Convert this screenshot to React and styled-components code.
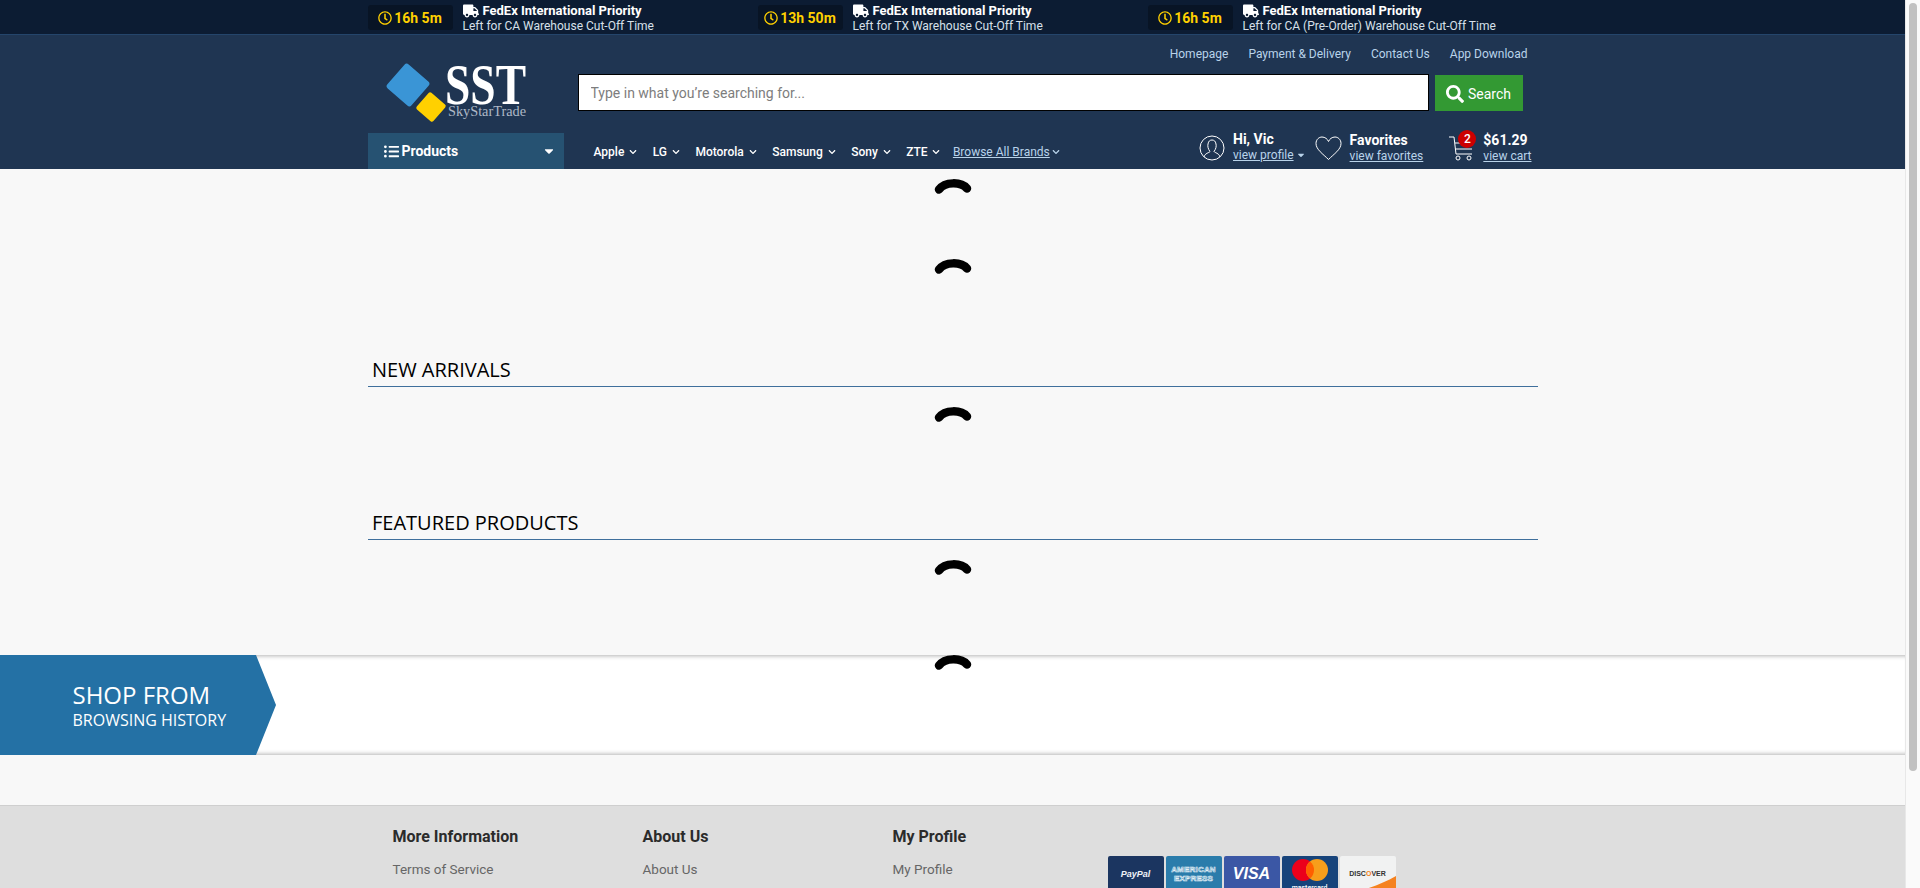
import React from 'react';
import styled, { createGlobalStyle } from 'styled-components';
import { FaRegClock, FaTruck, FaListUl, FaSearch, FaCaretDown, FaChevronDown } from 'react-icons/fa';

const GlobalStyle = createGlobalStyle`
  html, body {
    margin: 0;
    height: 888px;
    overflow: hidden;
    background: #f8f8f8;
    font-family: Roboto, "Liberation Sans", sans-serif;
  }
  * { box-sizing: border-box; }
`;

const Page = styled.div`
  width: calc(100vw - 15px);
  height: 888px;
  overflow: hidden;
`;

const Scrollbar = styled.div`
  position: fixed;
  top: 0;
  right: 0;
  width: 15px;
  height: 100vh;
  background: #fafafa;
  border-left: 1px solid #e8e8e8;
  padding: 3px 3px 0 3px;
`;

const ScrollThumb = styled.div`
  height: 768px;
  background: #c1c1c1;
  border-radius: 4px;
`;

const Container = styled.div`
  width: 1170px;
  margin: 0 auto;
`;

const TopBar = styled.div`
  height: 35px;
  background: #0c1c33;
  border-bottom: 1px solid #24456b;
`;

const TopRow = styled(Container)`
  display: grid;
  grid-template-columns: repeat(3, 1fr);
`;

const CutOff = styled.div`
  display: flex;
  gap: 10px;
  padding-top: 3px;
`;

const Timer = styled.div`
  display: flex;
  align-items: center;
  justify-content: center;
  gap: 2px;
  width: 85px;
  height: 25px;
  margin-top: 2px;
  background: #081425;
  border-radius: 3px;
  color: #ffd000;
  font-size: 14px;
  font-weight: 700;
`;

const CutOffText = styled.div`
  color: #fff;
  line-height: 14px;
`;

const Carrier = styled.div`
  display: flex;
  align-items: center;
  gap: 4px;
  font-size: 13px;
  font-weight: 700;
`;

const CutOffNote = styled.div`
  font-size: 12px;
  color: #d7e0ea;
`;

const Header = styled.header`
  height: 134px;
  background: #1f3552;
`;

const HeaderInner = styled(Container)`
  display: grid;
  grid-template-columns: 196px 1fr;
  grid-template-rows: 98px 36px;
`;

const LogoCell = styled.div`
  padding: 25px 0 0 18px;
`;

const HeaderMain = styled.div`
  padding-top: 11px;
`;

const TopLinks = styled.nav`
  display: flex;
  justify-content: flex-end;
  gap: 20px;
  height: 28px;
  padding-right: 10px;
`;

const TopLink = styled.a`
  font-size: 12px;
  line-height: 16px;
  color: #b9d3ea;
`;

const SearchRow = styled.form`
  display: flex;
  align-items: flex-start;
  gap: 6px;
  margin-left: 14px;
  margin-right: 15px;
`;

const SearchInput = styled.input`
  flex: 1;
  height: 37px;
  padding: 0 12px;
  border: 1px solid #000;
  background: #fff;
  font-family: inherit;
  font-size: 14px;
  &::placeholder { color: #7d7d7d; opacity: 1; }
`;

const SearchButton = styled.button`
  display: flex;
  align-items: center;
  justify-content: center;
  gap: 4px;
  width: 88px;
  height: 36px;
  margin-top: 1px;
  padding: 2px 0 0;
  border: 0;
  background: #339933;
  color: #fff;
  font-family: inherit;
  font-size: 14px;
  font-weight: 400;
`;

const ProductsButton = styled.div`
  display: flex;
  align-items: center;
  justify-content: space-between;
  padding: 0 8px 0 16px;
  background: #265272;
  color: #fff;
  font-size: 14px;
  font-weight: 700;
`;

const ProductsLabel = styled.span`
  display: flex;
  align-items: center;
  gap: 3px;
`;

const BottomRow = styled.div`
  display: flex;
  justify-content: space-between;
  align-items: center;
  padding-left: 30px;
`;

const BrandNav = styled.nav`
  display: flex;
  align-items: center;
  gap: 15.4px;
  padding-top: 1px;
`;

const Brand = styled.a`
  display: flex;
  align-items: center;
  gap: 5px;
  font-size: 12px;
  font-weight: 500;
  color: #fff;
`;

const AllBrands = styled(Brand)`
  gap: 2px;
  margin-left: -3px;
  font-weight: 400;
  color: #b9d3ea;
  span { text-decoration: underline; }
`;

const Account = styled.div`
  display: flex;
  margin-top: -6px;
`;

const AccountItem = styled.div`
  display: flex;
  align-items: center;
  position: relative;
  gap: ${(p) => p.$gap}px;
  margin-right: ${(p) => p.$after}px;
`;

const AccountText = styled.div`
  line-height: 15px;
`;

const AccountTitle = styled.div`
  font-size: 14px;
  font-weight: 700;
  color: #fff;
`;

const AccountLink = styled.a`
  display: block;
  margin-top: 1px;
  font-size: 12px;
  color: #b9d3ea;
  text-decoration: underline;
`;

const Caret = styled.span`
  display: inline-block;
  margin-left: 2px;
  vertical-align: -1px;
`;

const CartBadge = styled.span`
  position: absolute;
  left: 10px;
  top: -2px;
  width: 18px;
  height: 18px;
  border-radius: 50%;
  background: #cc0000;
  color: #fff;
  font-size: 12px;
  font-weight: 500;
  line-height: 18px;
  text-align: center;
`;

const Main = styled.main`
  padding-top: 10px;
`;

const SpinnerSlot = styled.div`
  display: flex;
  justify-content: center;
  height: 16px;
  margin-top: ${(p) => p.$top || 0}px;
`;

const SectionTitle = styled.h2`
  height: 32px;
  margin: ${(p) => p.$top}px 0 0;
  padding-left: 4.5px;
  border-bottom: 1px solid #3f6f9c;
  font-family: "Open Sans", sans-serif;
  font-size: 20px;
  font-weight: 400;
  line-height: 30px;
  color: #000;
`;

const HistoryBand = styled.section`
  position: relative;
  height: 100px;
  margin-top: 79px;
  background: #fff;
  box-shadow: inset 0 5px 4px -4px rgba(0, 0, 0, 0.3), inset 0 -5px 4px -4px rgba(0, 0, 0, 0.3);
`;

const BandSpinner = styled.div`
  position: absolute;
  top: 0;
  left: 0;
  right: 0;
  display: flex;
  justify-content: center;
`;

const Ribbon = styled.div`
  width: 276px;
  height: 100px;
  padding: 25px 0 0 72.5px;
  background: #2471a5;
  clip-path: polygon(0 0, 256px 0, 276px 50%, 256px 100%, 0 100%);
  font-family: "Open Sans", sans-serif;
  color: #fff;
`;

const RibbonTop = styled.div`
  font-size: 24px;
  line-height: 30px;
`;

const RibbonBottom = styled.div`
  font-size: 16px;
  line-height: 20px;
`;

const Footer = styled.footer`
  height: 83px;
  margin-top: 50px;
  background: #dedede;
  border-top: 1px solid #cfcfcf;
  overflow: hidden;
`;

const FooterInner = styled(Container)`
  display: grid;
  grid-template-columns: 250px 250px 215px 1fr;
  padding: 21px 0 0 25px;
`;

const FooterCol = styled.div``;

const FooterTitle = styled.div`
  font-size: 16px;
  font-weight: 700;
  line-height: 20px;
  color: #2b2b2b;
`;

const FooterLink = styled.a`
  display: block;
  margin-top: 14px;
  font-size: 13.5px;
  line-height: 16px;
  color: #666;
`;

const PayRow = styled.div`
  display: flex;
  gap: 2px;
  padding-top: 29px;
`;

const PayCard = styled.div`
  position: relative;
  display: flex;
  align-items: center;
  justify-content: center;
  flex: none;
  width: 56px;
  height: 36px;
  overflow: hidden;
  border-radius: 2px;
  background: ${(p) => p.$bg};
`;

const PayPalText = styled.span`
  font: italic 700 9px "Liberation Sans", sans-serif;
  color: #eef2f7;
`;

const AmexText = styled.span`
  font: 700 8px/9px "Liberation Sans", sans-serif;
  text-align: center;
  letter-spacing: 0.2px;
  color: #2a7cab;
  -webkit-text-stroke: 0.6px #e4f0f7;
`;

const VisaText = styled.span`
  font: italic 700 16px "Liberation Sans", sans-serif;
  color: #fff;
`;

const MasterCircles = styled.svg`
  margin-bottom: 9px;
`;

const MasterWord = styled.span`
  position: absolute;
  left: 0;
  right: 0;
  bottom: 0;
  font: 500 7px Roboto, sans-serif;
  text-align: center;
  color: #fff;
`;

const DiscoverText = styled.span`
  margin-bottom: 2px;
  font: 700 7px "Liberation Sans", sans-serif;
  color: #333;
  b { color: #f58220; }
`;

const DiscoverCorner = styled.svg`
  position: absolute;
  right: 0;
  bottom: 0;
`;

const Spinner = () => (
  <svg width="38" height="16" viewBox="0 0 38 16">
    <path d="M5 10.5 C11 2.5 27 2.5 33 9.5" fill="none" stroke="#000" strokeWidth="8.5" strokeLinecap="round" />
  </svg>
);

const Logo = () => (
  <svg width="150" height="66" viewBox="0 0 150 66">
    <rect x="6" y="9" width="32" height="32" rx="3" fill="#3a95d6" transform="rotate(41 22 25)" />
    <rect x="34" y="36" width="22" height="22" rx="2" fill="#ffd000" transform="rotate(41 45 47)" />
    <text x="59" y="44" fill="#fff" fontFamily="Liberation Serif" fontWeight="700" fontSize="56" textLength="81" lengthAdjust="spacingAndGlyphs">SST</text>
    <text x="62" y="56" fill="#aeb8c6" fontFamily="Liberation Serif" fontSize="14" textLength="78" lengthAdjust="spacingAndGlyphs">SkyStarTrade</text>
  </svg>
);

const UserIcon = () => (
  <svg width="26" height="26" viewBox="0 0 26 26" fill="none" stroke="#fff" strokeWidth="1">
    <circle cx="13" cy="13" r="12" />
    <path d="M5 22 C6 18 10 18 11 16.5 C9 14 8.5 11 9 9 C9.5 6 11 5 13 5 C15 5 16.5 6 17 9 C17.5 11 17 14 15 16.5 C16 18 20 18 21 22" />
  </svg>
);

const HeartIcon = () => (
  <svg width="27" height="25" viewBox="0 0 27 25" fill="none" stroke="#fff" strokeWidth="1">
    <path d="M13.5 23.5 C8 18 1 13.5 1 7.5 C1 3.5 4 1 7 1 C10 1 12.5 3 13.5 5.5 C14.5 3 17 1 20 1 C23 1 26 3.5 26 7.5 C26 13.5 19 18 13.5 23.5 Z" />
  </svg>
);

const CartIcon = () => (
  <svg width="26" height="28" viewBox="0 0 26 28" fill="none" stroke="#fff" strokeWidth="1">
    <path d="M1 3 H6 L8 20 H24" />
    <path d="M7 9 H24 M7.5 15 H24" />
    <circle cx="10" cy="24" r="2" />
    <circle cx="21" cy="24" r="2" />
  </svg>
);

const cutOffs = [
  { time: '16h 5m', note: 'Left for CA Warehouse Cut-Off Time' },
  { time: '13h 50m', note: 'Left for TX Warehouse Cut-Off Time' },
  { time: '16h 5m', note: 'Left for CA (Pre-Order) Warehouse Cut-Off Time' },
];

const brands = ['Apple', 'LG', 'Motorola', 'Samsung', 'Sony', 'ZTE'];

const footerCols = [
  { title: 'More Information', link: 'Terms of Service' },
  { title: 'About Us', link: 'About Us' },
  { title: 'My Profile', link: 'My Profile' },
];

const App = () => {
  return (
    <Page>
      <GlobalStyle />
      <TopBar>
        <TopRow>
          {cutOffs.map((c) => (
            <CutOff key={c.note}>
              <Timer>
                <FaRegClock size={14} />
                {c.time}
              </Timer>
              <CutOffText>
                <Carrier>
                  <FaTruck size={16} />
                  FedEx International Priority
                </Carrier>
                <CutOffNote>{c.note}</CutOffNote>
              </CutOffText>
            </CutOff>
          ))}
        </TopRow>
      </TopBar>

      <Header>
        <HeaderInner>
          <LogoCell>
            <Logo />
          </LogoCell>
          <HeaderMain>
            <TopLinks>
              <TopLink>Homepage</TopLink>
              <TopLink>Payment &amp; Delivery</TopLink>
              <TopLink>Contact Us</TopLink>
              <TopLink>App Download</TopLink>
            </TopLinks>
            <SearchRow>
              <SearchInput placeholder="Type in what you’re searching for..." />
              <SearchButton type="button">
                <FaSearch size={18} />
                Search
              </SearchButton>
            </SearchRow>
          </HeaderMain>
          <ProductsButton>
            <ProductsLabel>
              <FaListUl size={15} />
              Products
            </ProductsLabel>
            <FaCaretDown size={14} />
          </ProductsButton>
          <BottomRow>
            <BrandNav>
              {brands.map((b) => (
                <Brand key={b}>
                  {b}
                  <FaChevronDown size={8} />
                </Brand>
              ))}
              <AllBrands>
                <span>Browse All Brands</span>
                <FaChevronDown size={8} />
              </AllBrands>
            </BrandNav>
            <Account>
              <AccountItem $gap={8} $after={9}>
                <UserIcon />
                <AccountText>
                  <AccountTitle>Hi, Vic</AccountTitle>
                  <AccountLink>
                    view profile
                    <Caret>
                      <FaCaretDown size={10} />
                    </Caret>
                  </AccountLink>
                </AccountText>
              </AccountItem>
              <AccountItem $gap={8} $after={25}>
                <HeartIcon />
                <AccountText>
                  <AccountTitle>Favorites</AccountTitle>
                  <AccountLink>view favorites</AccountLink>
                </AccountText>
              </AccountItem>
              <AccountItem $gap={9} $after={6}>
                <CartIcon />
                <CartBadge>2</CartBadge>
                <AccountText>
                  <AccountTitle>$61.29</AccountTitle>
                  <AccountLink>view cart</AccountLink>
                </AccountText>
              </AccountItem>
            </Account>
          </BottomRow>
        </HeaderInner>
      </Header>

      <Main>
        <SpinnerSlot>
          <Spinner />
        </SpinnerSlot>
        <SpinnerSlot $top={64}>
          <Spinner />
        </SpinnerSlot>
        <Container>
          <SectionTitle $top={80}>NEW ARRIVALS</SectionTitle>
        </Container>
        <SpinnerSlot $top={20}>
          <Spinner />
        </SpinnerSlot>
        <Container>
          <SectionTitle $top={85}>FEATURED PRODUCTS</SectionTitle>
        </Container>
        <SpinnerSlot $top={20}>
          <Spinner />
        </SpinnerSlot>

        <HistoryBand>
          <Ribbon>
            <RibbonTop>SHOP FROM</RibbonTop>
            <RibbonBottom>BROWSING HISTORY</RibbonBottom>
          </Ribbon>
          <BandSpinner>
            <Spinner />
          </BandSpinner>
        </HistoryBand>
      </Main>

      <Footer>
        <FooterInner>
          {footerCols.map((c) => (
            <FooterCol key={c.title}>
              <FooterTitle>{c.title}</FooterTitle>
              <FooterLink>{c.link}</FooterLink>
            </FooterCol>
          ))}
          <PayRow>
            <PayCard $bg="#1b3560">
              <PayPalText>PayPal</PayPalText>
            </PayCard>
            <PayCard $bg="#2a7cab">
              <AmexText>
                AMERICAN
                <br />
                EXPRESS
              </AmexText>
            </PayCard>
            <PayCard $bg="#3b57a5">
              <VisaText>VISA</VisaText>
            </PayCard>
            <PayCard $bg="#16437a">
              <MasterCircles width="38" height="26" viewBox="0 0 38 26">
                <circle cx="12" cy="13" r="11" fill="#eb001b" />
                <circle cx="26" cy="13" r="11" fill="#f79e1b" />
                <path d="M19 4.5 A11 11 0 0 1 19 21.5 A11 11 0 0 1 19 4.5 Z" fill="#ff5f00" />
              </MasterCircles>
              <MasterWord>mastercard</MasterWord>
            </PayCard>
            <PayCard $bg="#f1f2f2">
              <DiscoverText>
                DISC<b>O</b>VER
              </DiscoverText>
              <DiscoverCorner width="40" height="16" viewBox="0 0 40 16">
                <path d="M0 16 C14 12 28 7 40 0 V16 Z" fill="#f58220" />
              </DiscoverCorner>
            </PayCard>
          </PayRow>
        </FooterInner>
      </Footer>

      <Scrollbar>
        <ScrollThumb />
      </Scrollbar>
    </Page>
  );
};

export default App;
